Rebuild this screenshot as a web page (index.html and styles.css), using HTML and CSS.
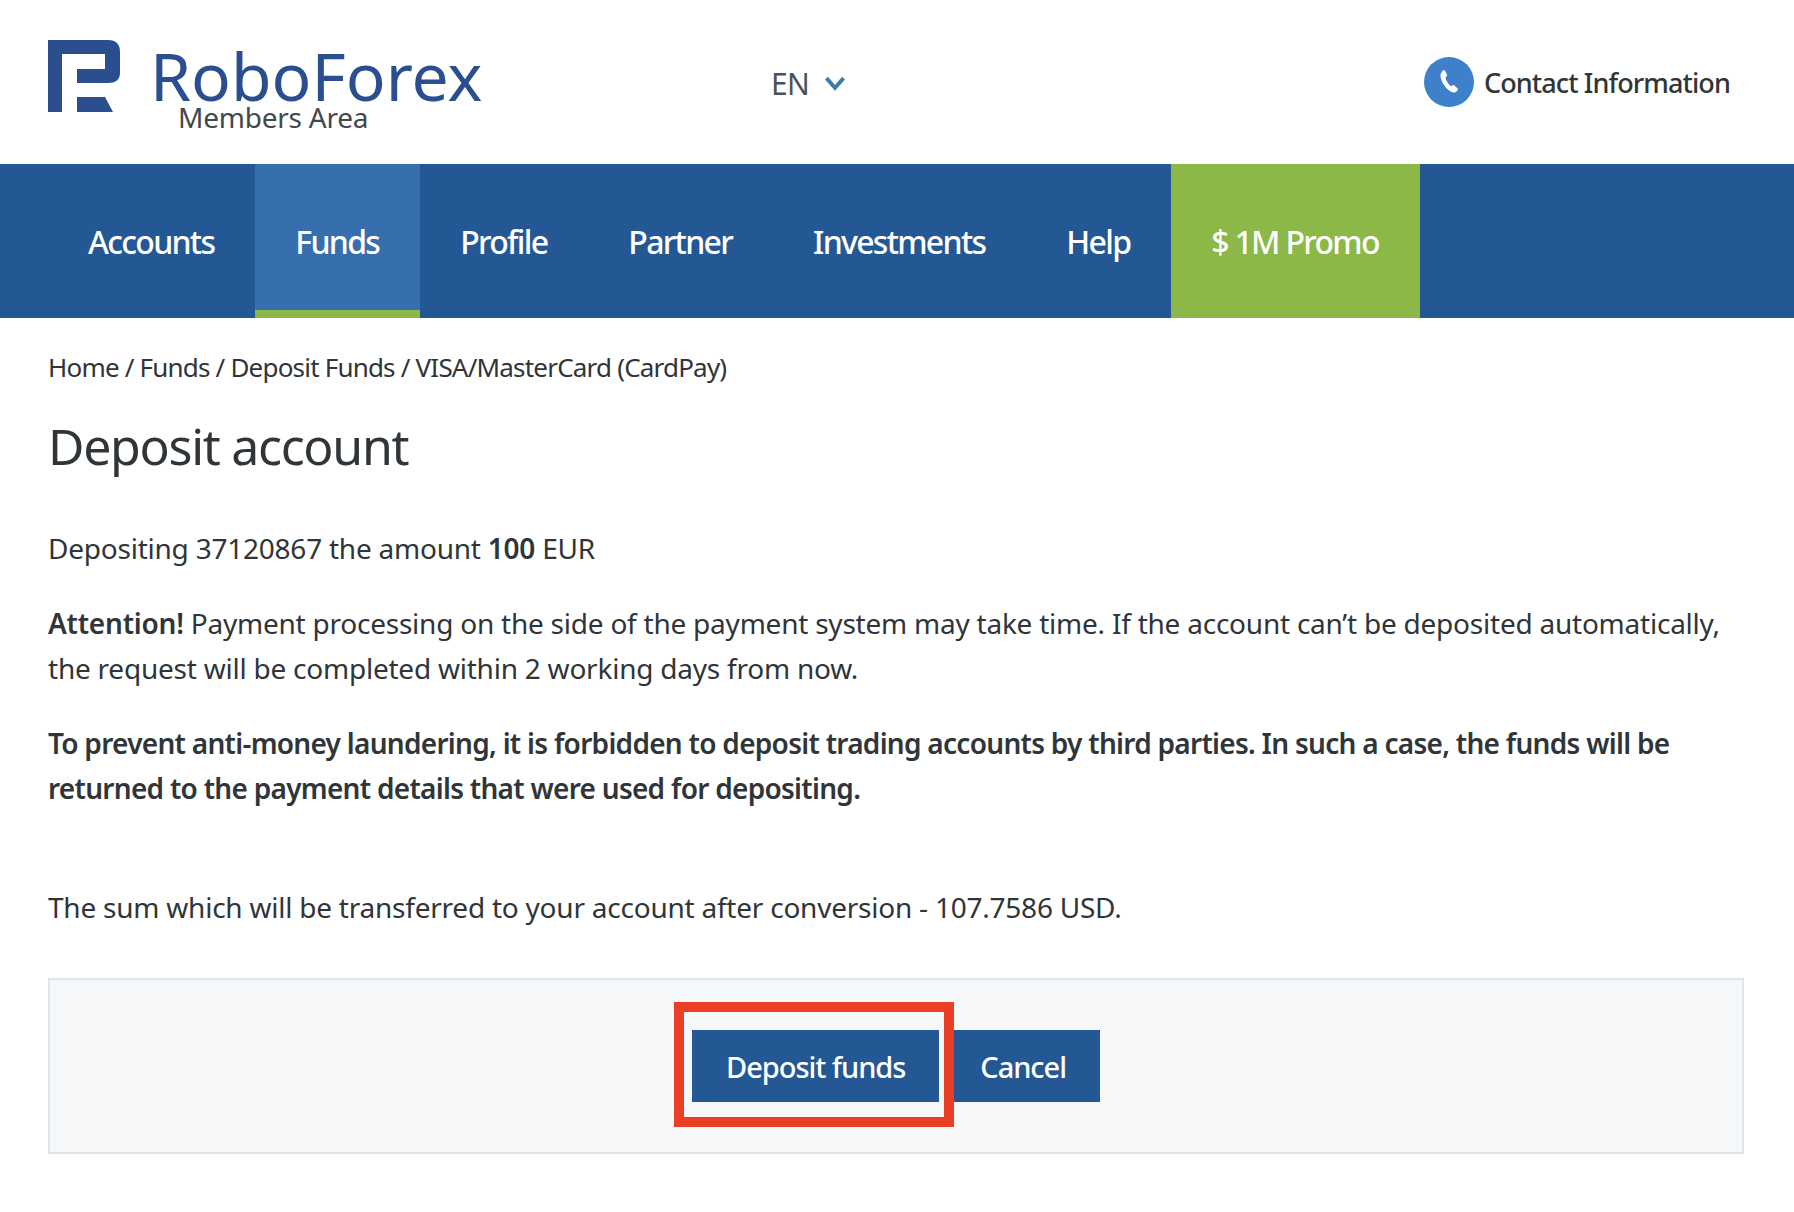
FILE: index.html
```html
<!DOCTYPE html>
<html lang="en">
<head>
    <meta charset="utf-8">
    <title>Deposit account</title>
    <link rel="stylesheet" href="styles.css">
</head>
<body>
<header class="top">
    <a class="logo">
        <svg class="logo-mark" viewBox="0 0 72 72" width="72" height="72">
            <path fill="#2b4f8e" d="M0 0H60Q72 0 72 12V33Q72 43 60 43H29V29H57V14H14V72H0Z"/>
            <path fill="#2b4f8e" d="M29 57H57L65 72H29Z"/>
        </svg>
        <div class="logo-text">
            <div class="logo-name">RoboForex</div>
            <div class="logo-sub">Members Area</div>
        </div>
    </a>
    <div class="lang">
        <span>EN</span>
        <svg viewBox="0 0 20 14" width="22" height="15"><path d="M2 2L10 11L18 2" fill="none" stroke="#3f7ba8" stroke-width="3.6"/></svg>
    </div>
    <div class="contact">
        <span class="phone">
            <svg viewBox="0 0 24 24" width="32" height="32"><path fill="#fff" d="M7.600 3.300c.5-.4 1.200-.3 1.500.3l1.400 3c.2.5.1 1-.3 1.300l-.9.8c.5 2.500 2.100 5 4.300 6.500l1.100-.7c.4-.3 1-.2 1.300.1l2.300 2.100c.4.400.5 1.100.1 1.600-.9 1.200-2.300 1.900-3.700 1.400C10.700 18.600 6.100 12.500 5.600 7.500 5.500 5.800 6.300 4.200 7.600 3.300Z"/></svg>
        </span>
        <span>Contact Information</span>
    </div>
</header>

<nav class="menu">
    <a>Accounts</a>
    <a class="active">Funds</a>
    <a>Profile</a>
    <a>Partner</a>
    <a>Investments</a>
    <a>Help</a>
    <a class="promo">$ 1M Promo</a>
</nav>

<main class="content">
    <div class="crumbs">Home / Funds / Deposit Funds / VISA/MasterCard (CardPay)</div>
    <h1>Deposit account</h1>
    <p class="amount">Depositing 37120867 the amount <b>100</b> EUR</p>
    <p><b>Attention!</b> Payment processing on the side of the payment system may take time. If the account can’t be deposited automatically, the request will be completed within 2 working days from now.</p>
    <p class="strong">To prevent anti-money laundering, it is forbidden to deposit trading accounts by third parties. In such a case, the funds will be returned to the payment details that were used for depositing.</p>
    <p class="sum">The sum which will be transferred to your account after conversion - 107.7586 USD.</p>
    <div class="actions">
        <span class="marked">
            <button class="btn">Deposit funds</button>
            <span class="red-box"></span>
        </span>
        <button class="btn">Cancel</button>
    </div>
</main>
</body>
</html>
```

FILE: styles.css
```css
* {
    box-sizing: border-box;
}

body {
    margin: 0;
    font: 28px/45px "Noto Sans", sans-serif;
    letter-spacing: -0.23px;
    color: #2f3538;
    background: #fff;
}

.top {
    height: 164px;
    padding: 40px 64px 0 48px;
    display: flex;
    align-items: flex-start;
}

.logo {
    width: 723px;
    display: flex;
    gap: 30px;
}

.logo-mark {
    flex: none;
}

.logo-name {
    font: 400 66px/56px "Noto Sans", sans-serif;
    letter-spacing: 0;
    color: #2b4f8e;
    margin-top: 7px;
}

.logo-sub {
    font-size: 28px;
    line-height: 28px;
    color: #43484b;
    margin-left: 28px;
}

.lang {
    display: flex;
    align-items: center;
    gap: 15px;
    height: 86px;
    font-size: 30px;
    letter-spacing: -0.7px;
    color: #4b5256;
}

.contact {
    margin-left: auto;
    display: flex;
    align-items: center;
    gap: 10px;
    height: 84px;
    font-size: 27px;
    font-weight: 500;
    letter-spacing: -0.9px;
}

.phone {
    width: 50px;
    height: 50px;
    border-radius: 50%;
    background: #3e80c9;
    display: flex;
    align-items: center;
    justify-content: center;
}

.menu {
    height: 154px;
    padding-left: 48px;
    display: flex;
    background: #245894;
    font-size: 32px;
    font-weight: 500;
    letter-spacing: -1.7px;
    color: #fff;
}

.menu a {
    padding: 0 41px 0 40px;
    display: flex;
    align-items: center;
}

.menu .active {
    background: #366eae;
    box-shadow: inset 0 -8px #8bb846;
}

.menu .promo {
    background: #8bb846;
}

.content {
    padding: 27px 50px 0 48px;
}

.crumbs {
    font-size: 26px;
    line-height: 45px;
    letter-spacing: -0.8px;
}

h1 {
    margin: 21px 0 45px;
    font-size: 50px;
    line-height: 70px;
    font-weight: 400;
    letter-spacing: -1.3px;
}

p {
    margin: 0 0 30px;
}

b {
    font-weight: 600;
}

.strong {
    font-weight: 600;
    letter-spacing: -0.72px;
}

.sum {
    margin-top: 74px;
    margin-bottom: 48px;
}

.actions {
    height: 176px;
    background: #f6f7f9;
    border: 2px solid #dfe6ea;
    display: flex;
    align-items: center;
    justify-content: center;
    gap: 7px;
}

.btn {
    display: block;
    height: 72px;
    padding: 0 34px;
    border: 0;
    background: #245894;
    color: #fff;
    font: 500 29px "Noto Sans", sans-serif;
    letter-spacing: -1.05px;
}

.marked {
    position: relative;
    display: block;
}

.red-box {
    position: absolute;
    top: -28px;
    right: -15px;
    bottom: -25px;
    left: -18px;
    border: 10px solid #ea3f25;
}
```
